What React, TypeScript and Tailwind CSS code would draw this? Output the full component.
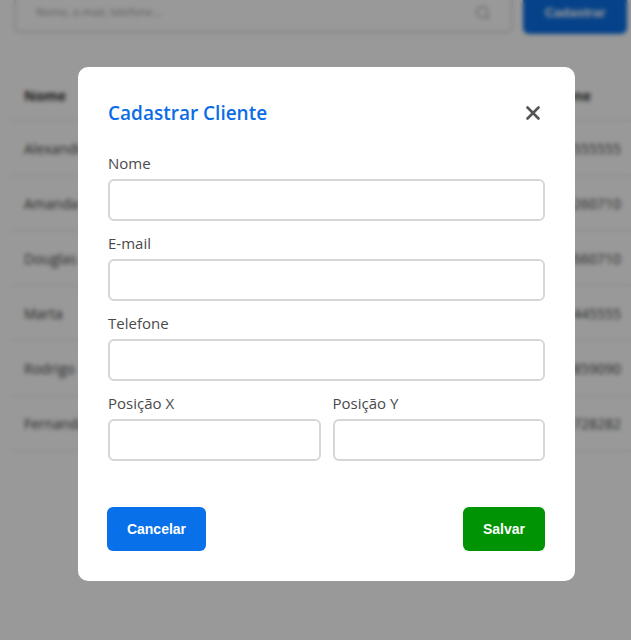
import { Search } from 'lucide-react';

const clientes = [
  { nome: 'Alexandre', tel: '11955555555' },
  { nome: 'Amanda', tel: '11991260710' },
  { nome: 'Douglas', tel: '11987660710' },
  { nome: 'Marta', tel: '1194445555' },
  { nome: 'Rodrigo', tel: '11980859090' },
  { nome: 'Fernanda', tel: '11971728282' },
];

function Field({ label }: { label: string }) {
  return (
    <label className="flex flex-col gap-[6px]">
      <span className="text-[15px] font-medium leading-[20px] text-[#4a4a4a]">{label}</span>
      <input
        type="text"
        className="h-[42px] w-full rounded-[6px] border-2 border-[#d6d6d6] bg-white px-3 text-[15px] outline-none"
      />
    </label>
  );
}

export default function App() {
  return (
    <div className="relative h-[640px] w-[631px] overflow-hidden bg-white font-['Open_Sans',sans-serif]">
      {/* Page behind the modal */}
      <div className="flex flex-col">
        <div className="flex gap-[10px] pl-[14px] pr-[4px]">
          <div className="-mt-[8px] flex h-[41px] flex-1 items-center justify-between rounded-[6px] border-2 border-[#dcdcdc] px-[20px]">
            <span className="text-[11px] text-[#a0a0a0]">Nome, e-mail, telefone...</span>
            <Search className="h-[16px] w-[16px] text-[#aaaaaa]" />
          </div>
          <button className="-mt-[8px] h-[42px] w-[104px] rounded-[6px] bg-[#0a6fe6] font-['Liberation_Sans',sans-serif] text-[13px] font-bold text-white">
            Cadastrar
          </button>
        </div>
        <div className="mt-[37px] pl-[10px]">
          <div className="flex h-[50px] items-center justify-between border-b border-[#e6e6e6] pl-[14px] pr-[40px] text-[14px] font-bold text-[#333333]">
            <span>Nome</span>
            <span>Telefone</span>
          </div>
          {clientes.map((c) => (
            <div
              key={c.nome}
              className="flex h-[55px] items-center justify-between border-b border-[#e6e6e6] pl-[14px] pr-[10px] text-[14px] text-[#444444]"
            >
              <span>{c.nome}</span>
              <span>{c.tel}</span>
            </div>
          ))}
        </div>
      </div>

      {/* Overlay */}
      <div className="absolute inset-0 bg-black/40 pl-[78px] pt-[67px] backdrop-blur-[2px]">
        <div className="flex w-[497px] flex-col rounded-[10px] bg-white px-[30px] pb-[30px] pt-[32px]">
          <div className="flex h-[28px] items-center justify-between">
            <h2 className="text-[19px] font-semibold text-[#0b6ce6]">Cadastrar Cliente</h2>
            <button className="mr-[5px] flex h-[14px] w-[14px] items-center justify-center">
              <svg width="14" height="14" viewBox="0 0 14 14">
                <path d="M1.5 1.5 L12.5 12.5 M12.5 1.5 L1.5 12.5" stroke="#555555" strokeWidth="2.6" strokeLinecap="round" />
              </svg>
            </button>
          </div>

          <div className="mt-[26px] flex flex-col gap-[12px]">
            <Field label="Nome" />
            <Field label="E-mail" />
            <Field label="Telefone" />
            <div className="grid grid-cols-2 gap-[12px]">
              <Field label="Posição X" />
              <Field label="Posição Y" />
            </div>
          </div>

          <div className="mt-[46px] flex items-center justify-between font-['Liberation_Sans',sans-serif]">
            <button className="-ml-[1px] h-[44px] w-[99px] rounded-[6px] bg-[#0870e8] text-[14px] font-bold text-white">
              Cancelar
            </button>
            <button className="h-[44px] w-[82px] rounded-[6px] bg-[#009405] text-[14px] font-bold text-white">
              Salvar
            </button>
          </div>
        </div>
      </div>
    </div>
  );
}
